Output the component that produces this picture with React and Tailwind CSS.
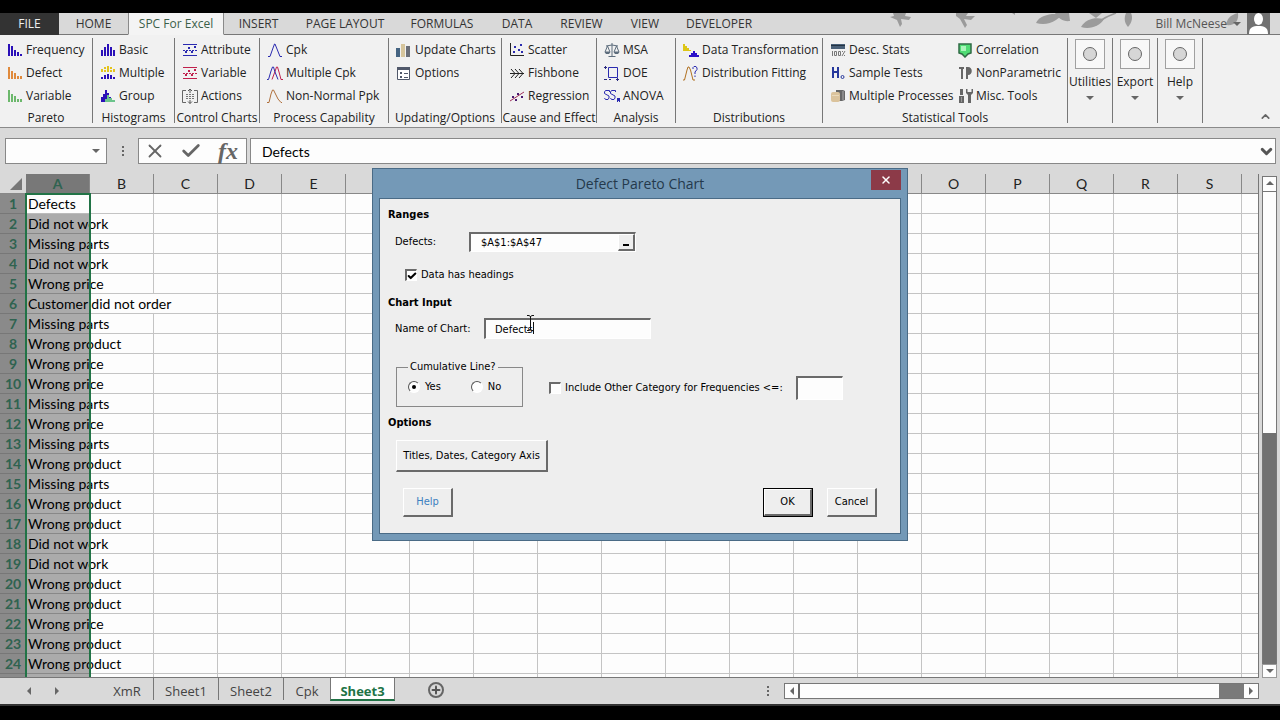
import React, { useState } from "react";
import { Check, ChevronDown, ChevronUp, Plus, X } from "lucide-react";

/* ---------- ribbon icons ---------- */

const Icon = ({ children }) => (
  <svg width="16" height="16" viewBox="0 0 16 16" fill="none" className="shrink-0" aria-hidden="true">
    {children}
  </svg>
);

// bars: [x, height], all standing on y = 14
const BarsIcon = ({ bars, color, width = 2 }) => (
  <Icon>
    {bars.map(([x, h]) => (
      <rect key={x} x={x} y={14 - h} width={width} height={h} fill={color} />
    ))}
  </Icon>
);

const paretoBars = [[1, 12], [4, 8], [7, 6], [10, 3], [13, 3]];

const FrequencyIcon = () => <BarsIcon bars={[[1, 12], [4, 10], [7, 6], [10, 4], [13, 2]]} color="#2a10b8" />;
const DefectIcon = () => <BarsIcon bars={paretoBars} color="#e08a3c" />;
const VariableParetoIcon = () => <BarsIcon bars={paretoBars} color="#6cb86c" />;
const BasicIcon = () => <BarsIcon bars={[[1, 6], [4, 9], [7, 12], [10, 9], [13, 6]]} color="#2a10b8" />;

const MultipleIcon = () => (
  <Icon>
    <path d="M1 4h2v3H1zM4 2h2v2H4zM4 5h2v2H4zM7 1h2v6H7zM10 2h2v2h-2zM10 5h2v2h-2zM13 4h2v3h-2z" fill="#e3c31c" />
    <path d="M1 12h2v2H1zM4 10h2v4H4zM7 9h2v5H7zM10 10h2v4h-2zM13 12h2v2h-2z" fill="#2a10b8" />
  </Icon>
);

const GroupIcon = () => (
  <Icon>
    <path d="M1 14V9h2V6h2V2h2v3h2v4h2v5z" fill="#2a10b8" />
    <path d="M5 14v-3h2V7h2v3h3v2h3v2z" fill="#6cc48c" />
  </Icon>
);

const ControlIcon = ({ color }) => (
  <Icon>
    <path d="M1 2.500h14M1 13.500h14" stroke={color} />
    <path d="M1 8.500h14" stroke={color} strokeDasharray="2 1" />
    <path d="M3 9h2v2H3zM6 5h2v2H6zM9 9h2v2H9zM12 4h2v2h-2z" fill={color} />
  </Icon>
);

const ActionsIcon = () => (
  <Icon>
    <path d="M4 2.500H.5v12H4M12 2.500h3.500v12H12" stroke="#666" />
    <path d="M4 6.500h8M4 8.500h8M4 10.500h8" stroke="#777" strokeDasharray="2 1" />
    <path d="M8 5V1M6 3l2-2 2 2M8 12v3.500M6 13.500l2 2 2-2" stroke="#555" />
  </Icon>
);

const CpkIcon = () => (
  <Icon>
    <path d="M1 14.500h2L6 6l1.500-4H8l2 5 3 7.500h2" stroke="#2a2ab0" />
  </Icon>
);

const MultipleCpkIcon = () => (
  <Icon>
    <path d="M5 14.500l3-8L9.500 2h1l1.500 5 2 7.500h2" stroke="#c0204c" />
    <path d="M0 14.500h1.500L4 6l1.500-4h1L8 7l3 7.500" stroke="#2a2ab0" />
  </Icon>
);

const PpkIcon = () => (
  <Icon>
    <path d="M0 14.500h2L4 6l1.500-4h1L8 5l3 6 3 3.500h1" stroke="#b0703c" />
  </Icon>
);

const UpdateChartsIcon = () => (
  <Icon>
    <path d="M0 6h4v9H0z" fill="#456482" />
    <path d="M5 2h4v13H5z" fill="#d6c59c" />
    <path d="M10 4h4v11h-4z" fill="#6a6e78" />
  </Icon>
);

const OptionsIcon = () => (
  <Icon>
    <path d="M1.500 2.500h12v12h-12z" fill="#fff" stroke="#50586a" />
    <path d="M1 2h13v3H1z" fill="#50586a" />
    <path d="M4 7h2v2H4zM4 11h2v2H4z" fill="#50586a" />
    <path d="M8 8.500h4M8 12.500h4" stroke="#50586a" />
  </Icon>
);

const ScatterIcon = () => (
  <Icon>
    <path d="M1.500 1v12.500H15" stroke="#222" />
    <path d="M4 9h2v2H4zM5 4h2v2H5zM9 7h2v2H9zM11 2h2v2h-2zM12 9h2v2h-2z" fill="#2a2ab0" />
  </Icon>
);

const FishboneIcon = () => (
  <Icon>
    <path d="M1 8.500h14M2 4l4 4.500L2 13M6 4l4 4.500L6 13M10 4l4 4.500-4 4.500" stroke="#222" />
  </Icon>
);

const RegressionIcon = () => (
  <Icon>
    <path d="M1 13L15 4" stroke="#a0305c" />
    <path d="M3 8h2v2H3zM6 11h2v2H6zM8 5h2v2H8zM12 8h2v2h-2z" fill="#4a1a70" />
  </Icon>
);

const ScaleIcon = () => (
  <Icon>
    <path d="M8 1v13M4.500 14.500h7M2 4l6-1 6 1" stroke="#5c6c7c" />
    <path d="M3.500 4L1 10h5zM12.500 4L10 10h5z" stroke="#5c6c7c" />
    <path d="M.5 10h6l-1.500 2H2zM9.500 10h6L14 12h-3z" fill="#5c6c7c" />
  </Icon>
);

const DoeIcon = () => (
  <Icon>
    <path d="M4.500 2.500h9v10h-9z" stroke="#2a2ab0" />
    <path d="M0 2.500h3M1.500 1v3M0 14.500h3M5 14.500h2M12 14.500h3M13.500 13v3" stroke="#2a2a80" />
  </Icon>
);

const AnovaIcon = () => (
  <Icon>
    <path d="M5.500 4V2.500h-4L.5 4v1.500L5 8v2l-1 1.500H1.500L.5 10M11.500 4V2.500h-4L6.500 4v1.500L11 8v2l-1 1.500H7.500L6.500 10" stroke="#2a2ab0" />
    <path d="M13 10h3v4h-1v-1h-1v1h-1z" fill="#2a2ab0" />
  </Icon>
);

const TransformationIcon = () => (
  <Icon>
    <path d="M0 9V2h2v2h2v2h2v2h2v1z" fill="#ddc617" />
    <path d="M6 15v-2h2v-2h2V9h2v2h2v2h2v2z" fill="#2a10c8" />
  </Icon>
);

const FittingIcon = () => (
  <Icon>
    <path d="M0 15h1.500L4 5l1-3h1l1.500 3L10 15h2" stroke="#b07020" />
    <path d="M10 4V2.500L11 1.500h2l1 1.500v1.500L12 7v2M12 10.500v1.500" stroke="#2a2ab0" />
  </Icon>
);

const DescStatsIcon = () => (
  <Icon>
    <path d="M1 2h14v5H1z" fill="#4a6078" />
    <path d="M1 3.500h14" stroke="#243444" />
    <path d="M2.500 9v5M4.500 9.500h2v4h-2zM8.500 9.500h2v4h-2zM15 9l-3 5M12 9.500h1M14 13.500h1" stroke="#777" />
  </Icon>
);

const SampleTestsIcon = () => (
  <Icon>
    <path d="M3 2v11M8 2v11" stroke="#26389c" strokeWidth="2" />
    <path d="M2 7h6" stroke="#26389c" strokeWidth="2" />
    <circle cx="12.500" cy="12" r="1.500" stroke="#26389c" />
  </Icon>
);

const ProcessesIcon = () => (
  <Icon>
    <path d="M6 2h7l2 1v9l-3 1H6z" fill="#666" />
    <path d="M13 3v9" stroke="#aaa" />
    <rect x="1" y="4" width="9" height="10" rx="2" fill="#dbc39c" />
    <path d="M2 7.500h7" stroke="#ead9ba" />
  </Icon>
);

const CorrelationIcon = () => (
  <Icon>
    <path d="M2 2h12v9l-3 1-3 3-3-3-3-1z" fill="#4fdc74" stroke="#2f6a44" strokeWidth="1.500" />
    <path d="M4 4h5v5H4z" fill="#a9f5ba" />
  </Icon>
);

const NonParametricIcon = () => (
  <Icon>
    <path d="M2 3h5M5 2v12" stroke="#666" strokeWidth="2" />
    <path d="M8 2h3c5 0 5 8 0 8v4H9V2z" fill="#666" />
  </Icon>
);

const ToolsIcon = () => (
  <Icon>
    <path d="M3 1h3v6H3zM2 8h5v7H2z" fill="#666" />
    <path d="M4.500 9v5" stroke="#999" />
    <path d="M9 1v4l2 2v8h3V7l2-2V1h-1.500v3h-4V1z" fill="#666" />
  </Icon>
);

/* ---------- data ---------- */

const menuTabs = [
  { name: "HOME", width: "w-[69px]" },
  { name: "SPC For Excel", width: "w-24", active: true },
  { name: "INSERT", width: "w-[69px]" },
  { name: "PAGE LAYOUT", width: "w-[104px]" },
  { name: "FORMULAS", width: "w-[90px]" },
  { name: "DATA", width: "w-[60px]" },
  { name: "REVIEW", width: "w-[69px]" },
  { name: "VIEW", width: "w-[58px]" },
  { name: "DEVELOPER", width: "w-[90px]" },
];

const ribbonGroups = [
  {
    title: "Pareto",
    width: "w-[93px]",
    columns: [[["Frequency", FrequencyIcon], ["Defect", DefectIcon], ["Variable", VariableParetoIcon]]],
  },
  {
    title: "Histograms",
    width: "w-[82px]",
    columns: [[["Basic", BasicIcon], ["Multiple", MultipleIcon], ["Group", GroupIcon]]],
  },
  {
    title: "Control Charts",
    width: "w-[85px]",
    columns: [[
      ["Attribute", () => <ControlIcon color="#2a2ab0" />],
      ["Variable", () => <ControlIcon color="#c0204c" />],
      ["Actions", ActionsIcon],
    ]],
  },
  {
    title: "Process Capability",
    width: "w-[129px]",
    columns: [[["Cpk", CpkIcon], ["Multiple Cpk", MultipleCpkIcon], ["Non-Normal Ppk", PpkIcon]]],
  },
  {
    title: "Updating/Options",
    width: "w-[113px]",
    columns: [[["Update Charts", UpdateChartsIcon], ["Options", OptionsIcon]]],
  },
  {
    title: "Cause and Effect",
    width: "w-[95px]",
    columns: [[["Scatter", ScatterIcon], ["Fishbone", FishboneIcon], ["Regression", RegressionIcon]]],
  },
  {
    title: "Analysis",
    width: "w-[79px]",
    columns: [[["MSA", ScaleIcon], ["DOE", DoeIcon], ["ANOVA", AnovaIcon]]],
  },
  {
    title: "Distributions",
    width: "w-[147px]",
    columns: [[["Data Transformation", TransformationIcon], ["Distribution Fitting", FittingIcon]]],
  },
  {
    title: "Statistical Tools",
    width: "w-[245px]",
    columns: [
      [["Desc. Stats", DescStatsIcon], ["Sample Tests", SampleTestsIcon], ["Multiple Processes", ProcessesIcon]],
      [["Correlation", CorrelationIcon], ["NonParametric", NonParametricIcon], ["Misc. Tools", ToolsIcon]],
    ],
  },
];

const bigButtons = ["Utilities", "Export", "Help"];

const columns = "ABCDEFGHIJKLMNOPQRS".split("");

const defects = [
  "Defects", "Did not work", "Missing parts", "Did not work", "Wrong price",
  "Customer did not order", "Missing parts", "Wrong product", "Wrong price", "Wrong price",
  "Missing parts", "Wrong price", "Missing parts", "Wrong product", "Missing parts",
  "Wrong product", "Wrong product", "Did not work", "Did not work", "Wrong product",
  "Wrong product", "Wrong price", "Wrong product", "Wrong product",
];

const sheets = [
  { name: "XmR", width: "w-[53px]" },
  { name: "Sheet1", width: "w-[65px]" },
  { name: "Sheet2", width: "w-[65px]" },
  { name: "Cpk", width: "w-[46px]" },
];

/* ---------- small parts ---------- */

const Triangle = ({ dir, className = "" }) => {
  const points = {
    up: "0,5 4,1 8,5",
    down: "0,2 8,2 4,6",
    left: "6,0 6,8 2,4",
    right: "2,0 2,8 6,4",
  };
  return (
    <svg width="8" height="8" viewBox="0 0 8 8" className={`shrink-0 ${className}`} aria-hidden="true">
      <polygon points={points[dir]} fill="#666" />
    </svg>
  );
};

const Dots = () => (
  <span className="flex flex-col gap-[2px]">
    <i className="size-[2px] bg-[#666]" />
    <i className="size-[2px] bg-[#666]" />
    <i className="size-[2px] bg-[#666]" />
  </span>
);

/* ---------- window parts ---------- */

const MenuBar = () => (
  <nav className="relative flex h-[22px] shrink-0 bg-[#d9d9d9] text-[12px] leading-[18px] text-[#333]">
    <svg className="absolute top-0 right-0" width="400" height="22" viewBox="880 0 400 22" fill="#9b9b9b" aria-hidden="true">
      <path d="M893 0h13l-1 3 6 1-2 3-8-1 1 5-2 3-3-7-7-3 4-1z" />
      <path d="M956 0h12l-2 3 9 0-4 4-7-1 3 6-2 3-5-9-4-3z" />
      <path d="M1012 0h3v2z" />
      <path d="M1036 10c2-5 8-8 16-9h12l-8 6c-6 4-13 5-20 3z" />
      <path d="M1055 0h14l1 8c-7 1-12-3-15-8z" />
      <path d="M1098 9c6-4 12-7 18-9" fill="none" stroke="#9b9b9b" strokeWidth="1.500" />
      <path d="M1081 14c5-8 13-10 23-8-4 7-14 11-23 8z" />
      <path d="M1089 0h13l-6 5z" />
      <path d="M1126 0h5c2 5 1 9-3 14-4-5-4-9-2-14z" />
      <path d="M1226 12c1-6 4-10 12-12 1 8-3 13-12 12z" />
    </svg>
    <button className="w-[59px] bg-[#333] text-[#eee]">FILE</button>
    {menuTabs.map((tab) => (
      <button
        key={tab.name}
        className={`relative border-b whitespace-nowrap ${tab.width} ${
          tab.active
            ? "border-x border-x-[#8a8a8a] border-b-[#f4f4f4] bg-[#f4f4f4] text-[#3c5f4a]"
            : "border-b-[#777]"
        }`}
      >
        {tab.name}
      </button>
    ))}
    <div className="relative flex flex-1 items-center justify-end gap-[6px] border-b border-[#777] pr-[10px]">
      <button className="flex items-center gap-[6px] text-[#555]">
        Bill McNeese
        <Triangle dir="down" />
      </button>
      <svg width="23" height="21" viewBox="0 0 23 21" aria-label="Account picture">
        <path d="M0 0h23v21H0z" fill="#717171" />
        <ellipse cx="11.500" cy="6" rx="4.500" ry="6" fill="#fff" />
        <path d="M2 21c0-7 4-8 9.500-8s9.500 1 9.500 8z" fill="#fff" />
      </svg>
    </div>
  </nav>
);

const RibbonGroup = ({ group }) => (
  <section className={`flex shrink-0 flex-col border-r border-[#777] ${group.width}`}>
    <div className="flex flex-1">
      {group.columns.map((items, i) => (
        <div key={i} className={group.columns.length > 1 && i === 0 ? "w-[127px]" : ""}>
          {items.map(([label, ItemIcon]) => (
            <button key={label} className="flex h-[23px] items-center gap-[3px] pl-[7px] whitespace-nowrap">
              <ItemIcon />
              {label}
            </button>
          ))}
        </div>
      ))}
    </div>
    <h2 className="text-center leading-[10px] whitespace-nowrap">{group.title}</h2>
  </section>
);

const Ribbon = () => (
  <div className="flex h-[93px] shrink-0 border-b border-[#8a8a8a] bg-[#f1f1f1] pt-[3px] pb-1 text-[12px] text-[#222]">
    {ribbonGroups.map((group) => (
      <RibbonGroup key={group.title} group={group} />
    ))}
    {bigButtons.map((name) => (
      <button key={name} className="flex w-[45px] shrink-0 flex-col items-center border-r border-[#777] pt-px">
        <span className="flex size-[30px] shrink-0 items-center justify-center border border-[#a0a0a0] bg-[#f8f8f8]">
          <i className="size-[14px] rounded-full border border-[#666] bg-[#d6d6d6]" />
        </span>
        <span className="mt-1 leading-[18px]">{name}</span>
        <Triangle dir="down" className="mt-[3px]" />
      </button>
    ))}
    <button aria-label="Collapse the ribbon" className="mr-2 ml-auto self-end">
      <ChevronUp size={13} strokeWidth={3} className="text-[#666]" />
    </button>
  </div>
);

const FormulaBar = () => (
  <div className="flex h-[46px] shrink-0 items-start bg-[#d9d9d9] pt-[10px] pr-1 pl-[5px]">
    <div className="flex h-[26px] w-[102px] items-center border border-[#888] bg-[#fdfdfd] pr-[6px]">
      <input aria-label="Name box" className="w-full min-w-0 outline-none" />
      <button aria-label="Open name list">
        <Triangle dir="down" />
      </button>
    </div>
    <div className="flex h-[26px] w-[31px] items-center justify-center">
      <Dots />
    </div>
    <div className="flex h-[26px] w-[109px] items-center gap-[14px] border border-[#888] bg-[#fdfdfd] pl-[5px] text-[#666]">
      <button aria-label="Cancel entry">
        <X size={22} strokeWidth={2} />
      </button>
      <button aria-label="Confirm entry">
        <Check size={22} strokeWidth={3} />
      </button>
      <button
        aria-label="Insert function"
        className="w-6 font-['Liberation_Serif',serif] text-[24px] leading-5 font-bold italic"
      >
        fx
      </button>
    </div>
    <div className="ml-[3px] flex h-[26px] flex-1 items-center border border-[#888] bg-[#fdfdfd]">
      <input
        aria-label="Formula"
        defaultValue="Defects"
        className="min-w-0 flex-1 pl-[11px] font-['Lato',sans-serif] text-[14px] text-black outline-none"
      />
      <button aria-label="Expand formula bar">
        <ChevronDown size={17} strokeWidth={4} className="text-[#555]" />
      </button>
    </div>
  </div>
);

const Row = ({ number, text = "" }) => (
  <tr className="h-5">
    <th scope="row" className="border-b border-[#777] bg-[#8a8a8a] p-0 text-center font-bold text-[#2f6350]">
      {number}
    </th>
    {columns.map((c) => {
      if (c === "A") {
        return (
          <td
            key={c}
            className={`border-b p-0 pl-[2px] whitespace-nowrap ${
              number === 1 ? "border-[#bbb]" : "border-[#888] bg-[#ababab]"
            }`}
          >
            {text}
          </td>
        );
      }
      // long text spills over the line between B and C
      const spills = c === "B" && text.length > 20;
      return (
        <td
          key={c}
          className={`border-b border-b-[#c4c4c4] p-0 ${spills ? "" : "border-r border-r-[#c4c4c4]"}`}
        />
      );
    })}
    <td className="border-b border-[#c4c4c4] p-0" />
  </tr>
);

const Grid = () => (
  <div className="relative min-w-0 flex-1 overflow-hidden border-r border-b border-[#777] bg-[#fdfdfd]">
    <table className="w-full table-fixed border-separate border-spacing-0 font-['Lato',sans-serif] text-[14px] leading-[19px] text-black">
      <colgroup>
        <col className="w-[26px]" />
        {columns.map((c) => (
          <col key={c} className="w-16" />
        ))}
        <col />
      </colgroup>
      <thead>
        <tr className="h-5">
          <th className="border-b border-[#888] bg-[#d9d9d9] p-0">
            <svg width="12" height="12" viewBox="0 0 12 12" className="ml-[10px]" aria-hidden="true">
              <path d="M12 0v12H0z" fill="#777" />
            </svg>
          </th>
          {columns.map((c) => (
            <th
              key={c}
              scope="col"
              className={`border-r border-b border-[#888] p-0 ${
                c === "A" ? "bg-[#787878] font-bold text-[#2f6350]" : "bg-[#d9d9d9] font-normal text-[#222]"
              }`}
            >
              {c}
            </th>
          ))}
          <th className="border-b border-[#888] bg-[#d9d9d9] p-0" />
        </tr>
      </thead>
      <tbody>
        {defects.map((text, i) => (
          <Row key={i} number={i + 1} text={text} />
        ))}
        <Row />
      </tbody>
    </table>
    {/* selection outline */}
    <div className="pointer-events-none absolute top-[19px] bottom-0 left-[25px] w-[66px] border-2 border-b-0 border-[#217346]" />
  </div>
);

const VerticalScroll = () => (
  <div className="flex w-[21px] shrink-0 flex-col bg-[#d9d9d9] px-[3px] pt-[2px]">
    <button aria-label="Scroll up" className="flex h-4 shrink-0 items-center justify-center border border-[#777] bg-[#fdfdfd]">
      <Triangle dir="up" />
    </button>
    <div className="flex flex-1 flex-col justify-end border-x border-[#777] bg-[#fdfdfd]">
      <div className="h-[49%] bg-[#717171]" />
    </div>
    <button aria-label="Scroll down" className="flex h-[14px] shrink-0 items-center justify-center border border-[#999] bg-[#fdfdfd]">
      <Triangle dir="down" />
    </button>
  </div>
);

const SheetBar = () => (
  <footer className="flex h-7 shrink-0 border-b-2 border-[#333] bg-[#d9d9d9] text-[13px] leading-5 text-[#444]">
    <div className="flex w-[101px] items-center gap-5 border-r border-[#d9d9d9] pl-[25px]">
      <button aria-label="Previous sheet">
        <Triangle dir="left" />
      </button>
      <button aria-label="Next sheet">
        <Triangle dir="right" />
      </button>
    </div>
    {sheets.map((sheet, i) => (
      <button
        key={sheet.name}
        className={`mb-1 pt-[3px] ${i === sheets.length - 1 ? "" : "border-r border-[#777]"} ${sheet.width}`}
      >
        {sheet.name}
      </button>
    ))}
    <button className="mb-[3px] w-[65px] border-x border-b-2 border-x-[#777] border-b-[#217346] bg-white pt-[3px] font-bold text-[#217346]">
      Sheet3
    </button>
    <button
      aria-label="New sheet"
      className="mt-1 ml-[33px] flex size-4 items-center justify-center rounded-full border-2 border-[#666] text-[#555]"
    >
      <Plus size={12} strokeWidth={4} />
    </button>
    <div className="ml-auto flex items-center pr-[21px] pb-[1px]">
      <Dots />
      <div className="ml-[15px] flex h-4 w-[475px] border border-[#777] bg-[#fdfdfd]">
        <button aria-label="Scroll left" className="flex w-[15px] items-center justify-center border-r-2 border-[#666]">
          <Triangle dir="left" />
        </button>
        <div className="ml-auto w-[25px] bg-[#7a7a7a]" />
        <button aria-label="Scroll right" className="flex w-[14px] items-center justify-center">
          <Triangle dir="right" />
        </button>
      </div>
    </div>
  </footer>
);

/* ---------- dialog ---------- */

const sunken = "border border-[#fff] border-t-2 border-l-2 border-t-[#6a6a6a] border-l-[#6a6a6a] bg-[#fdfdfd]";
const raised = "border-t border-l border-r-2 border-b-2 border-t-white border-l-white border-r-[#6a6a6a] border-b-[#6a6a6a]";

const DefectDialog = () => {
  const [form, setForm] = useState({
    range: "$A$1:$A$47",
    headings: true,
    name: "Defects",
    cumulative: "yes",
    other: false,
    limit: "",
  });

  const handleChange = (e) => {
    const { name, value, type, checked } = e.target;
    setForm((prev) => ({ ...prev, [name]: type === "checkbox" ? checked : value }));
  };

  return (
    <div
      role="dialog"
      aria-labelledby="dialog-title"
      className="absolute top-[168px] left-1/2 w-[536px] -translate-x-1/2 border border-[#4a6b86] bg-[#7499b7] px-[6px] pb-[6px]"
    >
      <div className="relative flex h-[29px] items-center justify-center">
        <h1 id="dialog-title" className="text-[14px] text-[#24394c]">Defect Pareto Chart</h1>
        <button
          aria-label="Close"
          className="absolute top-px right-0 flex h-5 w-[30px] items-center justify-center bg-[#8c3a48] text-white"
        >
          <X size={12} strokeWidth={3} />
        </button>
      </div>

      <form
        onSubmit={(e) => e.preventDefault()}
        className="border border-[#4a6b86] bg-[#eee] px-2 pt-2 pb-4 font-['DejaVu_Sans_Condensed','DejaVu_Sans',sans-serif] text-[11px] leading-4 text-black"
      >
        <h2 className="font-bold">Ranges</h2>
        <div className="mt-[9px] flex h-5 items-center pl-[7px]">
          <label htmlFor="range" className="w-[74px]">Defects:</label>
          <div className={`flex h-5 w-[167px] ${sunken}`}>
            <input
              id="range"
              name="range"
              value={form.range}
              onChange={handleChange}
              className="min-w-0 flex-1 pl-[10px] outline-none"
            />
            <button
              type="button"
              aria-label="Select range"
              className={`flex w-[17px] items-end justify-center bg-[#eee] pb-[3px] ${raised}`}
            >
              <i className="h-[2px] w-[6px] bg-black" />
            </button>
          </div>
        </div>

        <label className="mt-[15px] flex items-center gap-1 pl-[17px]">
          <span className={`flex size-3 items-center justify-center ${sunken}`}>
            <input
              type="checkbox"
              name="headings"
              checked={form.headings}
              onChange={handleChange}
              className="peer sr-only"
            />
            <Check size={10} strokeWidth={5} className="hidden shrink-0 peer-checked:block" />
          </span>
          Data has headings
        </label>

        <h2 className="mt-3 font-bold">Chart Input</h2>
        <div className="mt-[7px] flex h-[21px] items-center pl-[7px]">
          <label htmlFor="chart-name" className="w-[89px]">Name of Chart:</label>
          <div className="relative">
            <input
              id="chart-name"
              name="name"
              value={form.name}
              onChange={handleChange}
              className={`h-[21px] w-[167px] pl-[9px] outline-none ${sunken}`}
            />
            {/* caret and mouse pointer */}
            <svg className="pointer-events-none absolute -top-1 left-[42px]" width="10" height="20" viewBox="0 0 10 20" fill="none">
              <path d="M1 1.500h2l1.500 1 1.500-1h2M4.500 2v14M1 16.500h2l1.500-1 1.500 1h2" stroke="#111" />
              <path d="M7.500 8v12" stroke="#111" />
            </svg>
          </div>
        </div>

        <div className="mt-5 flex pl-2">
          <fieldset className="h-[48px] w-[127px] border border-[#888] pl-[11px]">
            <legend className="px-[2px]">Cumulative Line?</legend>
            <div className="mt-1 flex gap-[30px]">
              {["Yes", "No"].map((option) => (
                <label key={option} className="flex items-center gap-[5px]">
                  <input
                    type="radio"
                    name="cumulative"
                    value={option.toLowerCase()}
                    checked={form.cumulative === option.toLowerCase()}
                    onChange={handleChange}
                    className="flex size-3 appearance-none items-center justify-center rounded-full border border-[#fff] border-t-[#555] border-l-[#555] bg-[#fdfdfd] checked:before:size-1 checked:before:rounded-full checked:before:bg-black"
                  />
                  {option}
                </label>
              ))}
            </div>
          </fieldset>
          <div className="mt-[17px] ml-[26px] flex h-6 items-center">
            <label className="flex items-center gap-1">
              <span className={`flex size-3 items-center justify-center ${sunken}`}>
                <input
                  type="checkbox"
                  name="other"
                  checked={form.other}
                  onChange={handleChange}
                  className="peer sr-only"
                />
                <Check size={10} strokeWidth={5} className="hidden shrink-0 peer-checked:block" />
              </span>
              <span className="w-[231px]">Include Other Category for Frequencies &lt;=:</span>
            </label>
            <input
              aria-label="Frequency limit"
              name="limit"
              value={form.limit}
              onChange={handleChange}
              className={`h-6 w-[47px] outline-none ${sunken}`}
            />
          </div>
        </div>

        <h2 className="mt-2 font-bold">Options</h2>
        <button type="button" className={`mt-[9px] ml-2 h-8 w-[152px] ${raised}`}>
          Titles, Dates, Category Axis
        </button>

        <div className="mt-4 flex items-center pr-[15px] pl-[15px]">
          <button type="button" className={`h-[29px] w-[50px] text-[#3c80c0] ${raised}`}>Help</button>
          <span className="ml-auto flex h-[29px] w-[50px] border border-black">
            <button type="submit" className={`flex-1 ${raised}`}>OK</button>
          </span>
          <button type="button" className={`ml-[14px] h-[29px] w-[50px] ${raised}`}>Cancel</button>
        </div>
      </form>
    </div>
  );
};

const App = () => {
  return (
    <div className="relative flex h-screen flex-col overflow-hidden bg-black pt-[13px] pb-[14px] font-['Open_Sans',sans-serif]">
      <MenuBar />
      <Ribbon />
      <FormulaBar />
      <main className="flex min-h-0 flex-1">
        <Grid />
        <VerticalScroll />
      </main>
      <SheetBar />
      <DefectDialog />
    </div>
  );
};

export default App;
